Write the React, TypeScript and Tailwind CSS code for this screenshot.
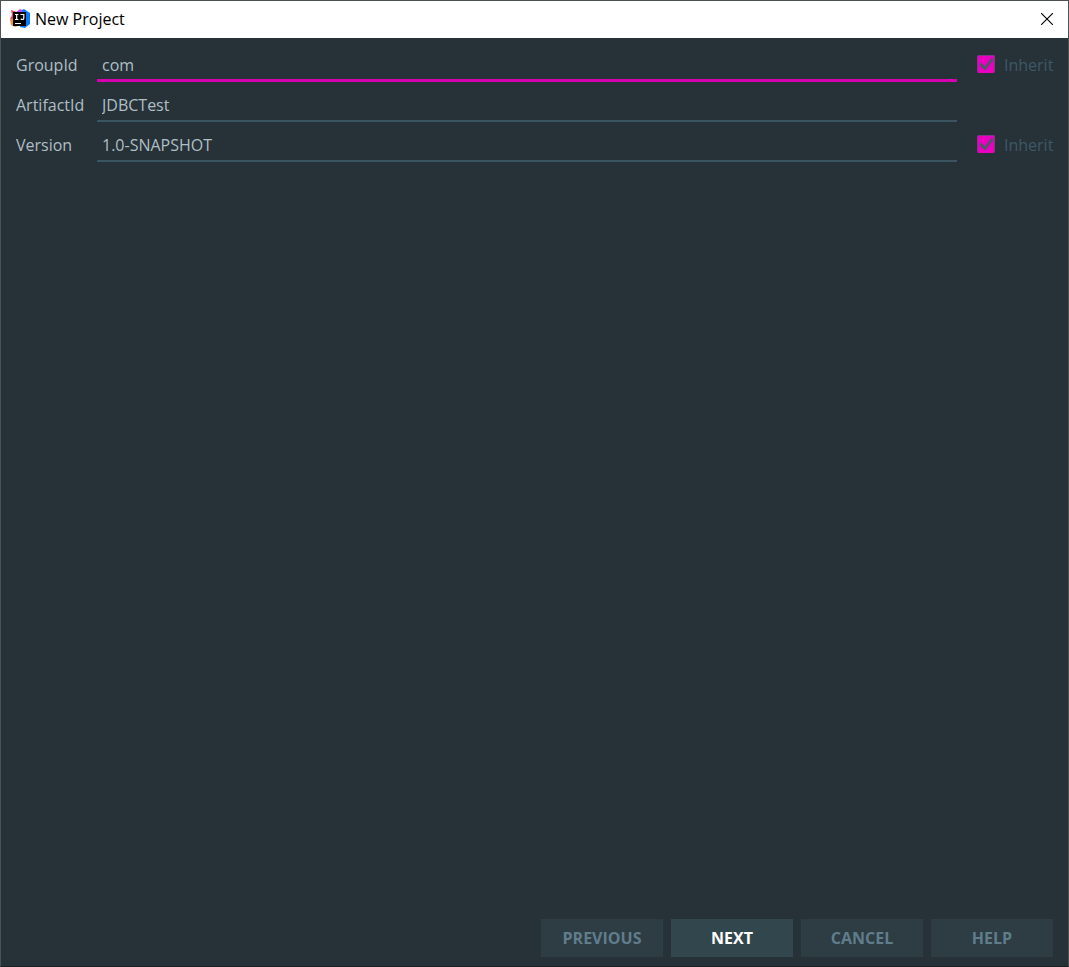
import { useState } from 'react';

interface FieldProps {
  id: string;
  label: string;
  initialValue: string;
  active?: boolean;
  inheritable?: boolean;
}

function IdeaLogo() {
  return (
    <svg viewBox="0 0 20 20" className="size-5 shrink-0" aria-hidden="true">
      <path d="M1 1 7 3 10 0v10H0l2-4z" fill="#f4405c" />
      <path d="M0 10h8v7l-3 1-4-2z" fill="#f98b3c" />
      <path d="M10 2 14 0l6 4v11l-5 4-5-1z" fill="#087cfa" />
      <path d="M6 3 11 0l2 4H6z" fill="#b74af7" />
      <rect x="3" y="3" width="13" height="14" fill="#000" />
      <path
        d="M5 5.5h3.4M6.7 5.5v5M5 10.5h3.4M10.5 5.5h3.3v3.7q0 1.3-1.3 1.3-1 0-1.8-.7"
        fill="none"
        stroke="#fff"
        strokeWidth="1.2"
      />
      <rect x="5" y="14" width="6" height="1" fill="#fff" />
    </svg>
  );
}

function TitleBar() {
  return (
    <header className="flex h-[37px] items-center justify-between bg-white pb-px pl-[9px] pr-3 text-black">
      <div className="flex items-center gap-[5px]">
        <IdeaLogo />
        <h1 className="text-[16px] leading-5">New Project</h1>
      </div>
      <button type="button" aria-label="Close" className="grid size-[18px] place-items-center">
        <svg viewBox="0 0 12 12" className="size-3" stroke="currentColor" strokeWidth="1.1">
          <path d="M0 0 12 12M12 0 0 12" />
        </svg>
      </button>
    </header>
  );
}

function InheritCheckbox({ id }: { id: string }) {
  const [checked, setChecked] = useState(true);

  return (
    <label htmlFor={id} className="flex items-center gap-[9px] text-[#3f5865]">
      <span className="grid size-[18px] place-items-center">
        <input
          id={id}
          type="checkbox"
          checked={checked}
          onChange={(e) => setChecked(e.target.checked)}
          className="peer col-start-1 row-start-1 size-[18px] appearance-none rounded-[2px] border border-[#546e7a] checked:border-[#7b3a86] checked:border-b-[#ea00c0] checked:bg-[#ea00c0]"
        />
        <svg
          viewBox="0 0 18 18"
          className="pointer-events-none invisible relative col-start-1 row-start-1 size-[18px] peer-checked:visible"
          fill="none"
          stroke="#455a64"
          strokeWidth="2.6"
          strokeLinecap="round"
          strokeLinejoin="round"
        >
          <path d="M4 9.5 8 13.5 15 4.5" />
        </svg>
      </span>
      <span className="pt-0.5">Inherit</span>
    </label>
  );
}

function Field({ id, label, initialValue, active = false, inheritable = false }: FieldProps) {
  const [value, setValue] = useState(initialValue);

  return (
    <div className="flex h-9 items-center">
      <label htmlFor={id} className="w-[81px] shrink-0 pt-0.5">
        {label}
      </label>
      <input
        id={id}
        type="text"
        value={value}
        onChange={(e) => setValue(e.target.value)}
        className={`h-full min-w-0 flex-1 bg-transparent px-[5px] outline-none ${
          active ? 'border-b-3 border-[#d600b0] pt-[5px]' : 'border-b-2 border-[#3b5462] pt-1'
        }`}
      />
      <div className="ml-5 w-[76px] shrink-0">
        {inheritable && <InheritCheckbox id={`${id}-inherit`} />}
      </div>
    </div>
  );
}

const actions = [
  { label: 'PREVIOUS' },
  { label: 'NEXT', primary: true },
  { label: 'CANCEL' },
  { label: 'HELP' },
];

export default function App() {
  return (
    <div className="flex min-h-screen flex-col border border-[#4c5154] border-b-[#1c2124] bg-[#263238] font-['Open_Sans','Noto_Sans',sans-serif] text-[16px] leading-5 text-[#b0bec5]">
      <TitleBar />
      <main className="flex flex-1 flex-col gap-1 px-[15px] pt-2">
        <Field id="group-id" label="GroupId" initialValue="com" active inheritable />
        <Field id="artifact-id" label="ArtifactId" initialValue="JDBCTest" />
        <Field id="version" label="Version" initialValue="1.0-SNAPSHOT" inheritable />
      </main>
      <footer className="flex justify-end gap-2 px-[15px] pb-[9px]">
        {actions.map(({ label, primary }) => (
          <button
            key={label}
            type="button"
            className={`h-[38px] w-[122px] text-[16px] font-bold ${
              primary ? 'bg-[#32474d] text-white' : 'bg-[#2e3c43] text-[#607d8b]'
            }`}
          >
            {label}
          </button>
        ))}
      </footer>
    </div>
  );
}
